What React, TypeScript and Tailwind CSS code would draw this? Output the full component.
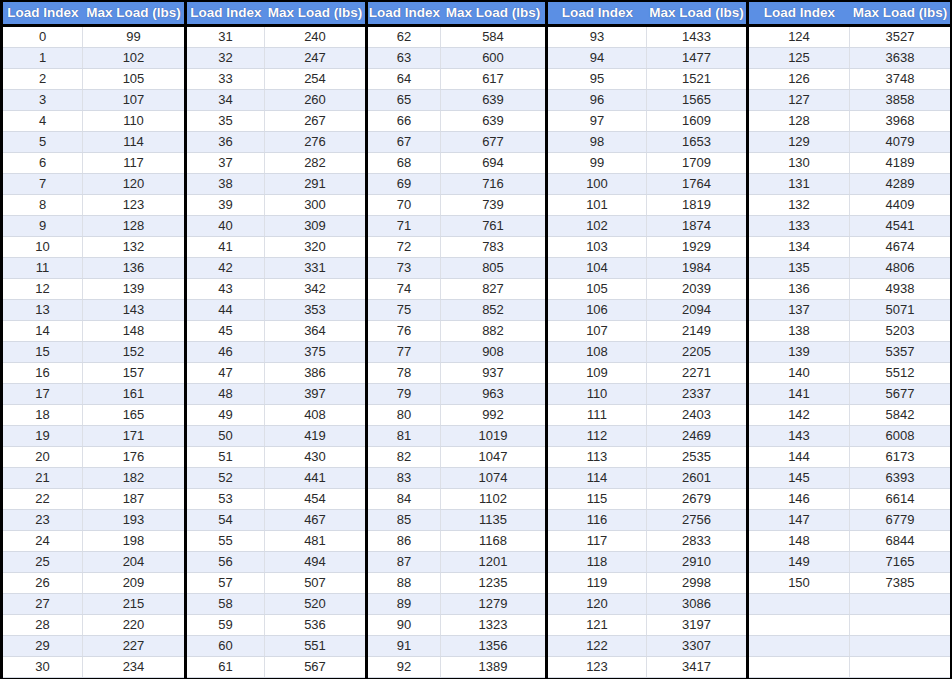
import React from 'react';

const loads = [
  99, 102, 105, 107, 110, 114, 117, 120, 123, 128, 132, 136, 139, 143, 148, 152, 157, 161, 165, 171, 176, 182, 187, 193,
  198, 204, 209, 215, 220, 227, 234, 240, 247, 254, 260, 267, 276, 282, 291, 300, 309, 320, 331, 342, 353, 364, 375, 386,
  397, 408, 419, 430, 441, 454, 467, 481, 494, 507, 520, 536, 551, 567, 584, 600, 617, 639, 639, 677, 694, 716, 739, 761,
  783, 805, 827, 852, 882, 908, 937, 963, 992, 1019, 1047, 1074, 1102, 1135, 1168, 1201, 1235, 1279, 1323, 1356, 1389,
  1433, 1477, 1521, 1565, 1609, 1653, 1709, 1764, 1819, 1874, 1929, 1984, 2039, 2094, 2149, 2205, 2271, 2337, 2403, 2469,
  2535, 2601, 2679, 2756, 2833, 2910, 2998, 3086, 3197, 3307, 3417, 3527, 3638, 3748, 3858, 3968, 4079, 4189, 4289, 4409,
  4541, 4674, 4806, 4938, 5071, 5203, 5357, 5512, 5677, 5842, 6008, 6173, 6393, 6614, 6779, 6844, 7165, 7385,
];

type Group = { start: number; width: string; first: string };

const groups: Group[] = [
  { start: 0, width: 'w-[181px]', first: 'w-[80px]' },
  { start: 31, width: 'w-[178px]', first: 'w-[78px]' },
  { start: 62, width: 'w-[177px]', first: 'w-[73px]' },
  { start: 93, width: 'w-[198px]', first: 'w-[99px]' },
  { start: 124, width: 'w-[201px]', first: 'w-[101px]' },
];

function LoadGroup({ group }: { group: Group }) {
  const rows = Array.from({ length: 31 }, (_, i) => group.start + i);
  return (
    <div className={`${group.width} flex flex-col`}>
      <div className="flex h-[22px] items-center bg-[#5b8fe4] text-[13.5px] font-bold text-white [text-shadow:0_0_1px_rgba(0,0,60,0.5)]">
        <div className={`${group.first} text-center whitespace-nowrap`}>Load Index</div>
        <div className="flex-1 text-center whitespace-nowrap">Max Load (lbs)</div>
      </div>
      <div className="mt-[3px] flex flex-col bg-white">
        {rows.map((idx, i) => {
          const has = idx < loads.length;
          return (
            <div
              key={idx}
              className={`flex h-[21px] items-center border-b border-[#d5dae4] text-[13px] text-[#2a2a2a] ${
                i % 2 === 1 ? 'bg-[#e9eefa]' : 'bg-white'
              }`}>
              <div className={`${group.first} flex h-full items-center justify-center border-r border-[#dcdfe6]`}>
                {has ? idx : ''}
              </div>
              <div className="flex-1 text-center">{has ? loads[idx] : ''}</div>
            </div>
          );
        })}
      </div>
    </div>
  );
}

export default function App() {
  return (
    <div className="h-[679px] w-[952px] overflow-hidden bg-black pl-[3px] pt-[2px] font-['Liberation_Sans',Arial,sans-serif]">
      <div className="flex gap-[3px]">
        {groups.map((g) => (
          <LoadGroup key={g.start} group={g} />
        ))}
      </div>
    </div>
  );
}
